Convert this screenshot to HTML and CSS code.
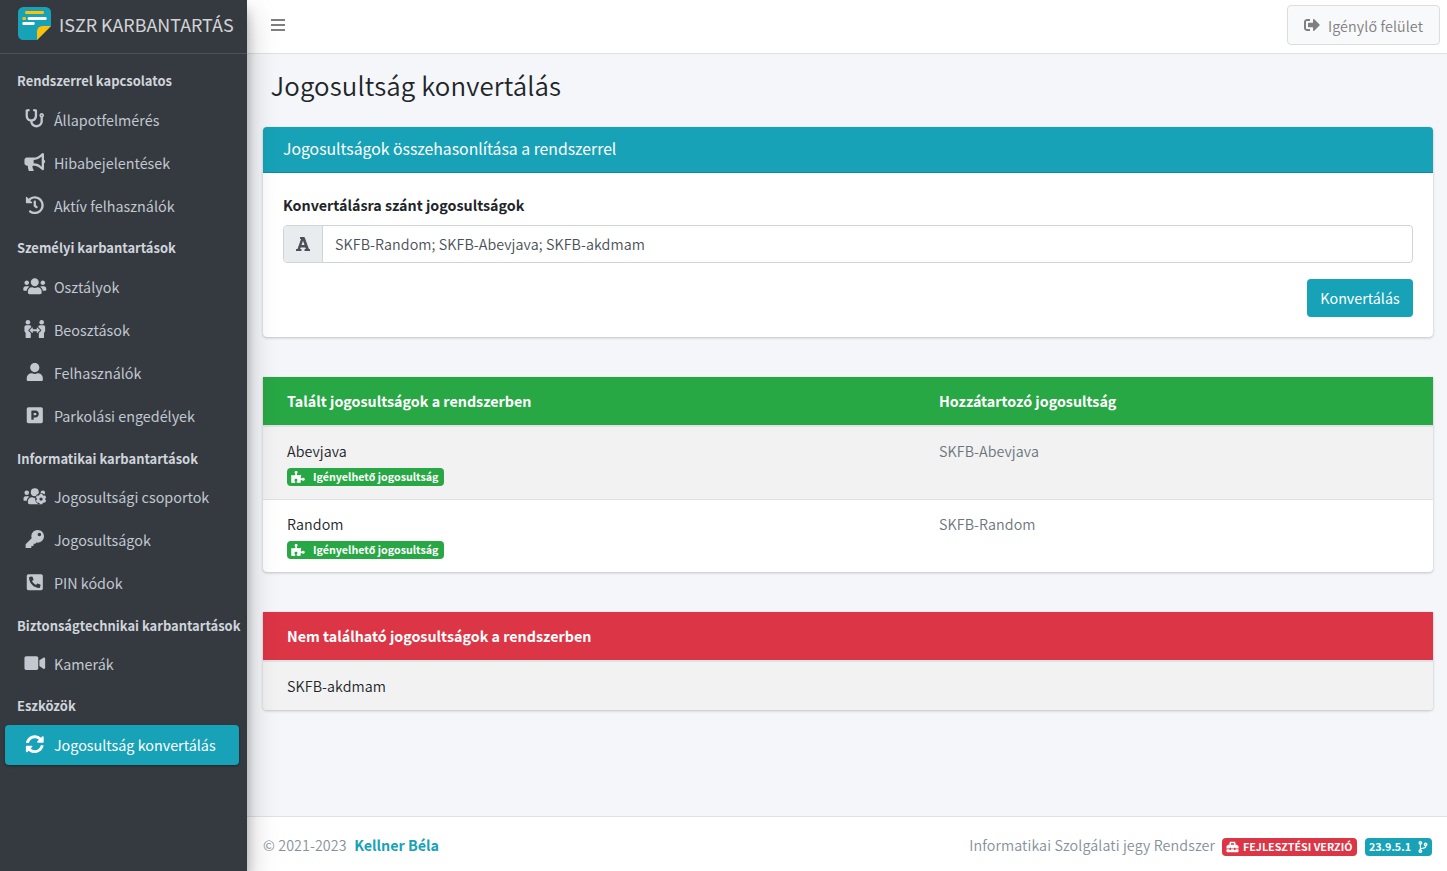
FILE: index.html
```html
<!DOCTYPE html>
<html lang="hu">
<head>
<meta charset="utf-8">
<title>ISZR Karbantartás</title>
<link rel="stylesheet" href="styles.css">
</head>
<body>
<svg class="sprite" aria-hidden="true">
  <symbol id="puzzle" viewBox="0 0 576 512"><path d="M519.442 288.651c-41.519 0-59.5 31.593-82.058 31.593C377.409 320.244 432 144 432 144s-196.288 80-196.288-3.297c0-35.827 36.288-46.25 36.288-85.985C272 19.216 243.885 0 210.539 0c-34.654 0-66.366 18.891-66.366 56.346 0 41.364 31.711 59.277 31.711 81.75C175.885 207.719 0 166.758 0 166.758v333.237s178.635 41.047 178.635-28.662c0-22.473-40-40.107-40-81.471 0-37.456 29.25-56.346 63.577-56.346 33.673 0 61.788 19.216 61.788 54.717 0 39.735-36.288 50.158-36.288 85.985 0 60.803 129.675 25.73 181.23 25.73 0 0-34.725-120.101 25.827-120.101 35.962 0 46.423 36.152 86.308 36.152C556.712 416 576 387.99 576 354.443c0-34.199-18.962-65.792-56.558-65.792z"/></symbol>
</svg>
<div class="wrapper">
  <aside class="sidebar">
    <div class="brand">
      <svg class="logo" viewBox="0 0 99 99">
        <path fill="#17a2b8" d="M16 0h67a16 16 0 0 1 16 16v41L57 99H16A16 16 0 0 1 0 83V16A16 16 0 0 1 16 0z"/>
        <path fill="#ffc107" d="M57 99V75q0-18 18-18h24z"/>
        <rect x="21" y="12" width="57" height="9" rx="4" fill="#ffc107"/>
        <rect x="13" y="30" width="11" height="9" rx="4" fill="#ffc107"/>
        <rect x="29" y="30" width="57" height="9" rx="4" fill="#fff"/>
        <rect x="13" y="45" width="37" height="9" rx="4" fill="#fff"/>
      </svg>
      <span class="brand-text">ISZR KARBANTARTÁS</span>
    </div>
    <nav class="nav">
      <div class="nav-header"><span>Rendszerrel kapcsolatos</span></div>
      <a class="nav-item"><svg class="nav-icon" viewBox="0 0 512 512"><path d="M447.1 112c-34.2.5-62.3 28.4-63 62.6-.5 24.3 12.5 45.6 32 56.8V344c0 57.3-50.2 104-112 104-60 0-109.2-44.1-111.9-99.2C265 333.8 320 269.2 320 192V36.6c0-11.4-8.1-21.3-19.3-23.5L237.8.5c-13-2.6-25.6 5.8-28.2 18.8L206.4 35c-2.6 13 5.8 25.6 18.8 28.2l30.7 6.1v121.4c0 52.9-42.2 96.7-95.1 97.2-53.4.5-96.9-42.7-96.9-96V69.4l30.7-6.1c13-2.6 21.4-15.2 18.8-28.2l-3.1-15.7C107.7 6.4 95.1-2 82.1.6L19.3 13C8.1 15.3 0 25.1 0 36.6V192c0 77.3 55.1 142 128.1 156.8C130.7 439.2 208.6 512 304 512c97 0 176-75.4 176-168V231.4c19.1-11.1 32-31.7 32-55.4 0-35.7-29.2-64.5-64.9-64zm.9 80c-8.8 0-16-7.2-16-16s7.2-16 16-16 16 7.2 16 16-7.2 16-16 16z"/></svg><span>Állapotfelmérés</span></a>
      <a class="nav-item"><svg class="nav-icon" viewBox="0 0 576 512"><path d="M576 240c0-23.63-12.95-44.04-32-55.12V32.01C544 23.26 537.02 0 512 0c-7.12 0-14.19 2.38-19.98 7.02l-85.03 68.03C364.28 109.19 310.66 128 256 128H64c-35.35 0-64 28.65-64 64v96c0 35.35 28.65 64 64 64h33.7c-1.39 10.48-2.18 21.14-2.18 32 0 39.77 9.26 77.35 25.56 110.94 5.19 10.69 16.52 17.06 28.4 17.06h74.28c26.05 0 41.69-29.84 25.9-50.56-16.4-21.52-26.15-48.36-26.15-77.44 0-11.11 1.62-21.79 4.41-32H256c54.66 0 108.28 18.81 150.98 52.95l85.03 68.03a32.023 32.023 0 0 0 19.98 7.02c24.92 0 32-22.78 32-32V295.13C563.05 284.04 576 263.63 576 240zm-96 141.42l-33.05-26.44C392.95 311.78 325.12 288 256 288v-96c69.12 0 136.95-23.78 190.95-66.98L480 98.58v282.84z"/></svg><span>Hibabejelentések</span></a>
      <a class="nav-item"><svg class="nav-icon" viewBox="0 0 512 512"><path d="M504 255.531c.253 136.64-111.18 248.372-247.82 248.468-59.015.042-113.223-20.53-155.822-54.911-11.077-8.94-11.905-25.541-1.839-35.607l11.267-11.267c8.609-8.609 22.353-9.551 31.891-1.984C173.062 425.135 212.781 440 256 440c101.705 0 184-82.311 184-184 0-101.705-82.311-184-184-184-48.814 0-93.149 18.969-126.068 49.932l50.754 50.754c10.08 10.08 2.941 27.314-11.313 27.314H24c-8.837 0-16-7.163-16-16V38.627c0-14.254 17.234-21.393 27.314-11.314l49.372 49.372C129.209 34.136 189.552 8 256 8c136.81 0 247.747 110.78 248 247.531zm-180.912 78.784l9.823-12.63c8.138-10.463 6.253-25.542-4.21-33.679L288 256.349V152c0-13.255-10.745-24-24-24h-16c-13.255 0-24 10.745-24 24v135.651l65.409 50.874c10.463 8.137 25.541 6.253 33.679-4.21z"/></svg><span>Aktív felhasználók</span></a>
      <div class="nav-header"><span>Személyi karbantartások</span></div>
      <a class="nav-item"><svg class="nav-icon" viewBox="0 0 640 512"><path d="M96 224c35.3 0 64-28.7 64-64s-28.7-64-64-64-64 28.7-64 64 28.7 64 64 64zm448 0c35.3 0 64-28.7 64-64s-28.7-64-64-64-64 28.7-64 64 28.7 64 64 64zm32 32h-64c-17.6 0-33.5 7.1-45.1 18.6 40.3 22.1 68.9 62 75.1 109.4h66c17.7 0 32-14.3 32-32v-32c0-35.3-28.7-64-64-64zm-256 0c61.9 0 112-50.1 112-112S381.9 32 320 32 208 82.1 208 144s50.1 112 112 112zm76.8 32h-8.3c-20.8 10-43.9 16-68.5 16s-47.6-6-68.5-16h-8.3C179.6 288 128 339.6 128 403.2V432c0 26.5 21.5 48 48 48h288c26.5 0 48-21.5 48-48v-28.8c0-63.6-51.6-115.2-115.2-115.2zm-223.7-13.4C161.5 263.1 145.6 256 128 256H64c-35.3 0-64 28.7-64 64v32c0 17.7 14.3 32 32 32h65.9c6.3-47.4 34.9-87.3 75.2-109.4z"/></svg><span>Osztályok</span></a>
      <a class="nav-item"><svg class="nav-icon" viewBox="0 0 576 512"><circle cx="96" cy="64" r="64"/><circle cx="480" cy="64" r="64"/><path d="M48 144h96c28 0 48 20 48 48l-76 76c-11 11-11 25 0 36l60 60v116c0 18-14 32-32 32H64c-18 0-32-14-32-32V350C12 340 0 324 0 304V192c0-28 20-48 48-48zM528 144h-96c-28 0-48 20-48 48l76 76c11 11 11 25 0 36l-60 60v116c0 18 14 32 32 32h80c18 0 32-14 32-32V350c20-10 32-26 32-46V192c0-28-20-48-48-48z"/><path d="M138 286l78-76q16-10 16 12v38h112v-38q0-22 16-12l78 76-78 76q-16 10-16-12v-38H232v38q0 22-16 12z"/></svg><span>Beosztások</span></a>
      <a class="nav-item"><svg class="nav-icon" viewBox="0 0 448 512"><path d="M224 256c70.7 0 128-57.3 128-128S294.7 0 224 0 96 57.3 96 128s57.3 128 128 128zm89.6 32h-16.7c-22.2 10.2-46.9 16-72.9 16s-50.6-5.8-72.9-16h-16.7C60.2 288 0 348.2 0 422.4V464c0 26.5 21.5 48 48 48h352c26.5 0 48-21.5 48-48v-41.6c0-74.2-60.2-134.4-134.4-134.4z"/></svg><span>Felhasználók</span></a>
      <a class="nav-item"><svg class="nav-icon" viewBox="0 0 448 512"><path d="M400 32H48C21.5 32 0 53.5 0 80v352c0 26.5 21.5 48 48 48h352c26.5 0 48-21.5 48-48V80c0-26.5-21.5-48-48-48zM240 320h-48v48c0 8.8-7.2 16-16 16h-32c-8.8 0-16-7.2-16-16V144c0-8.8 7.2-16 16-16h96c52.9 0 96 43.1 96 96s-43.1 96-96 96zm0-128h-48v64h48c17.6 0 32-14.4 32-32s-14.4-32-32-32z"/></svg><span>Parkolási engedélyek</span></a>
      <div class="nav-header"><span>Informatikai karbantartások</span></div>
      <a class="nav-item"><svg class="nav-icon" viewBox="0 0 640 512"><mask id="gap"><path fill="#fff" d="M0 0h640v512H0z"/><circle cx="488" cy="330" r="160" fill="#000"/></mask><g mask="url(#gap)"><circle cx="96" cy="160" r="64"/><circle cx="544" cy="160" r="64"/><circle cx="320" cy="144" r="112"/><path d="M396.8 288h-8.3c-20.8 10-43.9 16-68.5 16s-47.6-6-68.5-16h-8.3C179.6 288 128 339.6 128 403.2V432c0 26.5 21.5 48 48 48h288c26.5 0 48-21.5 48-48v-28.8zM173.1 274.6C161.5 263.1 145.6 256 128 256H64c-35.3 0-64 28.7-64 64v32c0 17.7 14.3 32 32 32h65.9c6.3-47.4 34.9-87.3 75.2-109.4z"/></g><circle cx="494" cy="336" r="84" fill="none" stroke="currentColor" stroke-width="76"/><path fill="none" stroke="currentColor" stroke-width="72" d="M494 190v60M494 422v60M367 263l52 30M569 379l52 30M367 409l52-30M569 293l52-30"/></svg><span>Jogosultsági csoportok</span></a>
      <a class="nav-item"><svg class="nav-icon" viewBox="0 0 512 512"><path d="M512 176.001C512 273.203 433.202 352 336 352c-11.22 0-22.19-1.062-32.827-3.069l-24.012 27.014A23.999 23.999 0 0 1 261.223 384H224v40c0 13.255-10.745 24-24 24h-40v40c0 13.255-10.745 24-24 24H24c-13.255 0-24-10.745-24-24v-78.059c0-6.365 2.529-12.47 7.029-16.971l161.802-161.802C163.108 213.814 160 195.271 160 176 160 78.798 238.797.001 335.999 0 433.488-.001 512 78.511 512 176.001zM336 128c0 26.51 21.49 48 48 48s48-21.49 48-48-21.49-48-48-48-48 21.49-48 48z"/></svg><span>Jogosultságok</span></a>
      <a class="nav-item"><svg class="nav-icon" viewBox="0 0 448 512"><path d="M400 32H48A48 48 0 0 0 0 80v352a48 48 0 0 0 48 48h352a48 48 0 0 0 48-48V80a48 48 0 0 0-48-48zm-16.39 307.37l-15 65A15 15 0 0 1 354 416C194 416 64 286.29 64 126a15.7 15.7 0 0 1 11.63-14.61l65-15A18.23 18.23 0 0 1 144 96a16.27 16.27 0 0 1 13.79 9.09l30 70A17.9 17.9 0 0 1 189 181a17 17 0 0 1-5.5 11.61l-37.89 31a231.91 231.91 0 0 0 110.78 110.78l31-37.89A17 17 0 0 1 299 291a17.85 17.85 0 0 1 5.91 1.21l70 30A16.25 16.25 0 0 1 384 336a17.41 17.41 0 0 1-.39 3.37z"/></svg><span>PIN kódok</span></a>
      <div class="nav-header"><span>Biztonságtechnikai karbantartások</span></div>
      <a class="nav-item"><svg class="nav-icon" viewBox="0 0 576 512"><path d="M336.2 64H47.8C21.4 64 0 85.4 0 111.8v288.4C0 426.6 21.4 448 47.8 448h288.4c26.4 0 47.8-21.4 47.8-47.8V111.8c0-26.4-21.4-47.8-47.8-47.8zm189.4 37.7L416 177.3v157.4l109.6 75.5c21.2 14.6 50.4-.3 50.4-25.8V127.5c0-25.4-29.1-40.4-50.4-25.8z"/></svg><span>Kamerák</span></a>
      <div class="nav-header"><span>Eszközök</span></div>
      <a class="nav-item active"><svg class="nav-icon" viewBox="0 0 512 512"><path d="M370.72 133.28C339.458 104.008 298.888 87.962 255.848 88c-77.458.068-144.328 53.178-162.791 126.85-1.344 5.363-6.122 9.15-11.651 9.15H24.103c-7.498 0-13.194-6.807-11.807-14.176C33.933 94.924 134.813 8 256 8c66.448 0 126.791 26.136 171.315 68.685L463.03 40.97C478.149 25.851 504 36.559 504 57.941V192c0 13.255-10.745 24-24 24H345.941c-21.382 0-32.09-25.851-16.971-40.971l41.75-41.749zM32 296h134.059c21.382 0 32.09 25.851 16.971 40.971l-41.75 41.75c31.262 29.273 71.835 45.319 114.876 45.28 77.418-.07 144.315-53.144 162.787-126.849 1.344-5.363 6.122-9.15 11.651-9.15h57.304c7.498 0 13.194 6.807 11.807 14.176C478.067 417.076 377.187 504 256 504c-66.448 0-126.791-26.136-171.315-68.685L48.97 471.03C33.851 486.149 8 475.441 8 454.059V320c0-13.255 10.745-24 24-24z"/></svg><span>Jogosultság konvertálás</span></a>
    </nav>
  </aside>
  <div class="page">
    <header class="topbar">
      <svg class="bars" viewBox="0 0 14 12"><path d="M0 0h14v2H0zM0 5h14v2H0zM0 10h14v2H0z"/></svg>
      <a class="btn-light"><svg class="exit" viewBox="0 0 512 512"><path d="M497 273L329 441c-15 15-41 4.5-41-17v-96H152c-13.3 0-24-10.7-24-24v-96c0-13.3 10.7-24 24-24h136V88c0-21.4 25.9-32 41-17l168 168c9.3 9.4 9.3 24.6 0 34zM192 436v-40c0-6.6-5.4-12-12-12H96c-17.7 0-32-14.3-32-32V160c0-17.7 14.3-32 32-32h84c6.6 0 12-5.4 12-12V76c0-6.6-5.4-12-12-12H96c-53 0-96 43-96 96v192c0 53 43 96 96 96h84c6.6 0 12-5.4 12-12z"/></svg><span class="btn-text">Igényl<span class="regular">ő</span> felület</span></a>
    </header>
    <main class="content">
      <h1 class="title"><span>Jogosultság konvertálás</span></h1>
      <section class="card form-card">
        <div class="card-header"><span>Jogosultságok összehasonlítása a rendszerrel</span></div>
        <div class="card-body">
          <label class="label"><span>Konvertálásra szánt jogosultságok</span></label>
          <div class="input-group">
            <div class="addon"><svg class="letter" viewBox="0 0 448 448"><path d="M432 384h-20L284 22A32 32 0 0 0 254 0H130v64h32L48 384H16a16 16 0 0 0-16 16v32a16 16 0 0 0 16 16h144a16 16 0 0 0 16-16v-32a16 16 0 0 0-16-16h-28l18-52h148l18 52h-28a16 16 0 0 0-16 16v32a16 16 0 0 0 16 16h144a16 16 0 0 0 16-16v-32a16 16 0 0 0-16-16zM176 258L224 116 272 258z"/></svg></div>
            <div class="field"><span>SKFB-Random; SKFB-Abevjava; SKFB-akdmam</span></div>
          </div>
          <button class="btn-info"><span>Konvertálás</span></button>
        </div>
      </section>
      <section class="card table">
        <div class="row head success"><span class="cell bold">Talált jogosultságok a rendszerben</span><span class="cell bold">Hozzátartozó jogosultság</span></div>
        <div class="row striped"><div class="cell"><div class="line">Abevjava</div><div class="badge badge-success"><svg class="puzzle"><use href="#puzzle"/></svg><span>Igényelhető jogosultság</span></div></div><div class="cell muted">SKFB-Abevjava</div></div>
        <div class="row"><div class="cell"><div class="line">Random</div><div class="badge badge-success"><svg class="puzzle"><use href="#puzzle"/></svg><span>Igényelhető jogosultság</span></div></div><div class="cell muted">SKFB-Random</div></div>
      </section>
      <section class="card table">
        <div class="row head danger"><span class="cell bold">Nem található jogosultságok a rendszerben</span></div>
        <div class="row striped short"><div class="cell">SKFB-akdmam</div></div>
      </section>
    </main>
    <footer class="footer">
      <span class="copy">© 2021-2023</span><a class="author">Kellner Béla</a>
      <span class="system">Informatikai Szolgálati jegy Rendszer</span>
      <div class="badge badge-danger"><svg class="toolbox" viewBox="0 0 512 512"><path d="M502.63 214.63l-45.25-45.25c-6-6-14.14-9.37-22.63-9.37H384V80c0-26.51-21.49-48-48-48H176c-26.51 0-48 21.49-48 48v80H77.25c-8.49 0-16.62 3.37-22.63 9.37L9.37 214.63c-6 6-9.37 14.14-9.37 22.63V320h128v-16c0-8.84 7.16-16 16-16h32c8.84 0 16 7.16 16 16v16h128v-16c0-8.84 7.16-16 16-16h32c8.84 0 16 7.16 16 16v16h128v-82.75c0-8.48-3.37-16.62-9.37-22.62zM320 160H192V96h128v64zm64 208c0 8.84-7.16 16-16 16h-32c-8.84 0-16-7.16-16-16v-16H192v16c0 8.84-7.16 16-16 16h-32c-8.84 0-16-7.16-16-16v-16H0v96c0 17.67 14.33 32 32 32h448c17.67 0 32-14.33 32-32v-96H384v16z"/></svg><span>FEJLESZTÉSI VERZIÓ</span></div>
      <div class="badge badge-info"><span>23.9.5.1</span><svg class="branch" viewBox="0 0 384 512"><path d="M384 144c0-44.2-35.8-80-80-80s-80 35.8-80 80c0 36.4 24.3 67.1 57.5 76.8-.6 16.1-4.2 28.5-11 36.9-15.4 19.2-49.3 22.4-85.2 25.7-28.2 2.6-57.4 5.4-81.3 16.9v-144c32.5-10.2 56-40.5 56-76.3 0-44.2-35.8-80-80-80S0 35.8 0 80c0 35.8 23.5 66.1 56 76.3v199.3C23.5 365.9 0 396.2 0 432c0 44.2 35.8 80 80 80s80-35.8 80-80c0-34-21.2-63.1-51.2-74.6 3.1-5.2 7.8-9.8 14.9-13.4 16.2-8.2 40.4-10.4 66.1-12.8 42.2-3.9 90-8.4 118.2-43.4 14-17.4 21.1-39.8 21.6-67.9 31.6-10.8 54.4-40.7 54.4-75.9zM80 64c8.8 0 16 7.2 16 16s-7.2 16-16 16-16-7.2-16-16 7.2-16 16-16zm0 384c-8.8 0-16-7.2-16-16s7.2-16 16-16 16 7.2 16 16-7.2 16-16 16zm224-320c8.8 0 16 7.2 16 16s-7.2 16-16 16-16-7.2-16-16 7.2-16 16-16z"/></svg></div>
    </footer>
  </div>
</div>
</body>
</html>
```
FILE: styles.css
```css
* { box-sizing: border-box; }
body {
  margin: 0;
  font-family: "Noto Sans CJK SC", "Open Sans", sans-serif;
  font-size: 14.3px;
  font-weight: 350;
  line-height: 24px;
  color: #212529;
  background: #f4f6f9;
}
svg { fill: currentColor; flex: none; }
.sprite { display: none; }
.wrapper { display: flex; height: 871px; overflow: hidden; white-space: nowrap; }

/* Sidebar */
.sidebar {
  position: relative;
  z-index: 2;
  flex: none;
  width: 247px;
  background: #343a40;
  color: #c2c7d0;
  box-shadow: 0 14px 28px rgba(0,0,0,.25), 0 10px 10px rgba(0,0,0,.22);
  font-weight: 400;
}
.brand {
  display: flex;
  align-items: center;
  height: 54px;
  padding: 0 0 7px 18px;
  border-bottom: 1px solid #4b545c;
  color: rgba(255,255,255,.8);
  font-size: 17.9px;
}
.logo { width: 33px; height: 33px; }
.brand-text { margin: 2px 0 0 8px; }
.nav { padding: 8.2px 8px 0 5px; }
.nav-header {
  height: 37.5px;
  padding-left: 12px;
  line-height: 37.2px;
  font-size: 12.95px;
  font-weight: 700;
  color: #d0d4db;
}
.nav-item {
  display: flex;
  align-items: center;
  height: 40px;
  margin-bottom: 3.2px;
  padding-left: 17px;
  border-radius: 4px;
  font-size: 14.35px;
}
.nav-icon { width: 25.6px; height: 18.4px; margin: -2px 6.3px 0 0; }
.active {
  background: #17a2b8;
  color: #fff;
  box-shadow: 0 1px 3px rgba(0,0,0,.12), 0 1px 2px rgba(0,0,0,.24);
}

/* Page */
.page { flex: 1; display: flex; flex-direction: column; }
.topbar {
  display: flex;
  justify-content: space-between;
  align-items: center;
  height: 54px;
  padding: 0 7px 3px 24px;
  background: #fff;
  border-bottom: 1px solid #dee2e6;
  color: #7f7f7f;
}
.bars { width: 14px; height: 12px; }
.btn-light {
  display: flex;
  align-items: center;
  width: 153px;
  height: 40px;
  padding-left: 16px;
  border: 1px solid #ddd;
  border-radius: 4px;
  background: #f8f9fa;
}
.btn-text { padding-top: 2px; letter-spacing: .12px; }
.regular { font-weight: 400; }
.exit { width: 16px; height: 16px; margin-right: 8px; }
.content { flex: 1; padding: 0 14px 0 16px; }
.title {
  margin: 0;
  height: 73px;
  padding: 13px 0 0 7.5px;
  font-size: 25.8px;
  line-height: 36px;
  font-weight: 350;
  letter-spacing: .13px;
}
.card {
  margin-bottom: 40px;
  border-radius: 4px;
  overflow: hidden;
  background: #fff;
  box-shadow: 0 0 1px rgba(0,0,0,.125), 0 1px 3px rgba(0,0,0,.2);
}
.form-card { height: 210px; }
.card-header {
  height: 46px;
  padding-left: 20px;
  line-height: 44px;
  border-bottom: 1px solid #148a9d;
  background: #17a2b8;
  color: #fff;
  font-size: 15.75px;
  font-weight: 400;
}
.card-body { display: flex; flex-direction: column; padding: 20px; }
.label { height: 32px; font-weight: 700; }
.input-group { display: flex; height: 38px; border: 1px solid #ced4da; border-radius: 4px; overflow: hidden; }
.addon {
  display: grid;
  place-items: center;
  width: 39px;
  background: #e9ecef;
  border-right: 1px solid #ced4da;
  color: #495057;
}
.letter { width: 14px; height: 14px; }
.field { padding-left: 12px; line-height: 36px; color: #495057; letter-spacing: .08px; }
.btn-info {
  align-self: flex-end;
  width: 106px;
  height: 38px;
  margin-top: 16px;
  padding: 0;
  border: 0;
  border-radius: 4px;
  background: #17a2b8;
  color: #fff;
  font: inherit;
  font-weight: 400;
}

/* Tables */
.table { border-radius: 0 0 4px 4px; }
.row { display: grid; grid-template-columns: 652px 1fr; height: 73px; padding: 12px 24px 0; border-top: 1px solid #dee2e6; letter-spacing: .08px; }
.head { height: 48px; border: 0; color: #fff; letter-spacing: 0; }
.head + .row { height: 74px; border-top-width: 2px; }
.head + .short { height: 50px; }
.striped { background: #f2f2f2; }
.bold { font-weight: 700; }
.success { background: #28a745; }
.danger { background: #dc3545; }
.muted { color: #6c757d; }
.line { height: 29px; }

/* Badges */
.badge {
  display: inline-flex;
  align-items: center;
  height: 18px;
  padding: 0 4px;
  border-radius: 4px;
  color: #fff;
  font-size: 10.7px;
  font-weight: 700;
  letter-spacing: 0;
  line-height: 18px;
}
.badge-success { display: flex; width: 157px; background: #28a745; }
.badge-danger { width: 135px; margin: 3px 8px 0 7px; background: #dc3545; }
.badge-info { width: 67px; margin-top: 3px; justify-content: space-between; background: #17a2b8; }
.puzzle { width: 14px; height: 12px; margin-right: 8px; }
.toolbox { width: 13px; height: 12px; margin-right: 4px; }
.branch { width: 10px; height: 12px; }

/* Footer */
.footer {
  display: flex;
  align-items: center;
  height: 55px;
  padding: 2px 15px 0 16px;
  border-top: 1px solid #dee2e6;
  background: #fff;
  color: #869099;
}
.copy { letter-spacing: .08px; }
.author { margin-left: 7.5px; color: #17a2b8; font-weight: 700; }
.system { margin-left: auto; letter-spacing: .1px; }
```
